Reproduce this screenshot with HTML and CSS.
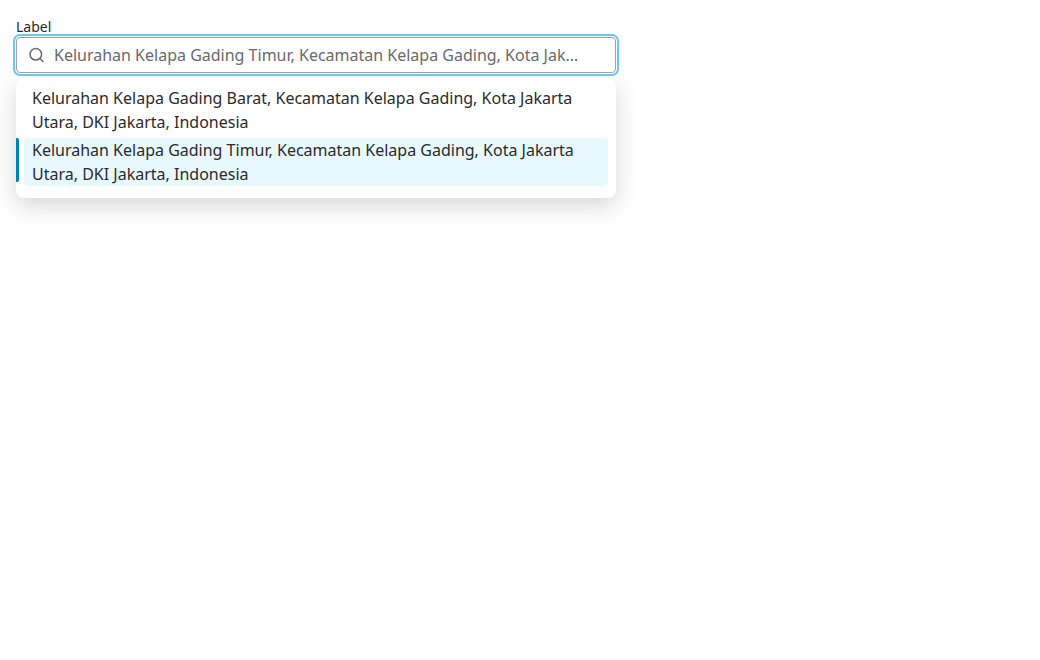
FILE: index.html
```html
<!DOCTYPE html>
<html lang="en">
<head>
<meta charset="utf-8">
<meta name="viewport" content="width=device-width, initial-scale=1">
<title>Location search</title>
<link rel="stylesheet" href="styles.css">
</head>
<body>
<main class="page">
  <div class="field">
    <label class="field-label" for="location">Label</label>
    <div class="search">
      <svg class="search-icon" viewBox="0 0 16 16" aria-hidden="true"><circle cx="6.8" cy="7.3" r="5.8"/><path d="M11 11.5 14 14.5"/></svg>
      <input class="search-input" id="location" type="text" role="combobox" aria-expanded="true" aria-controls="locations" placeholder="Kelurahan Kelapa Gading Timur, Kecamatan Kelapa Gading, Kota Jakarta Utara, DKI Jakarta, Indonesia">
    </div>
    <ul class="menu" id="locations" role="listbox" aria-label="Locations">
      <li class="option" role="option" aria-selected="false">Kelurahan Kelapa Gading Barat, Kecamatan Kelapa Gading, Kota Jakarta Utara, DKI Jakarta, Indonesia</li>
      <li class="option option-active" role="option" aria-selected="true">Kelurahan Kelapa Gading Timur, Kecamatan Kelapa Gading, Kota Jakarta Utara, DKI Jakarta, Indonesia</li>
    </ul>
  </div>
</main>
</body>
</html>
```
FILE: styles.css
```css
* {
  box-sizing: border-box;
}

body {
  margin: 0;
  background: #fff;
  color: #2b2b2b;
  font-family: "Noto Sans", sans-serif;
  font-size: 16px;
  line-height: 24px;
}

.page {
  min-height: 100vh;
  padding: 16px;
}

.field {
  display: flex;
  flex-direction: column;
  max-width: 600px;
}

.field-label {
  font-size: 14px;
  line-height: 21px;
}

.search {
  position: relative;
  z-index: 1;
  display: flex;
  align-items: center;
  gap: 9px;
  height: 36px;
  padding: 0 32px 0 12px;
  border: 1px solid #a0a0a0;
  border-radius: 4px;
  background: #fff;
  box-shadow: 0 0 0 1px #fff, 0 0 0 3px #6cc7ec;
}

.search-icon {
  flex: none;
  width: 16px;
  height: 16px;
  fill: none;
  stroke: #6a6a6a;
  stroke-width: 1.5;
  stroke-linecap: round;
}

.search-input {
  flex: 1;
  min-width: 0;
  padding: 0;
  border: 0;
  outline: 0;
  background: none;
  color: #2b2b2b;
  font: inherit;
  text-overflow: ellipsis;
}

.search-input::placeholder {
  color: #6a6a6a;
  opacity: 1;
}

.menu {
  display: flex;
  flex-direction: column;
  gap: 4px;
  margin: 5px 0 0;
  padding: 8px 8px 12px;
  border-radius: 8px;
  background: #fff;
  box-shadow: 0 8px 24px rgba(0, 0, 0, 0.16);
  list-style: none;
}

.option {
  position: relative;
  padding: 0 8px;
  border-radius: 4px;
}

.option-active {
  background: #e8f8ff;
}

.option-active::before {
  content: "";
  position: absolute;
  top: 0;
  bottom: 4px;
  left: -8px;
  width: 3px;
  border-radius: 0 2px 2px 0;
  background: #0080bb;
}
```
